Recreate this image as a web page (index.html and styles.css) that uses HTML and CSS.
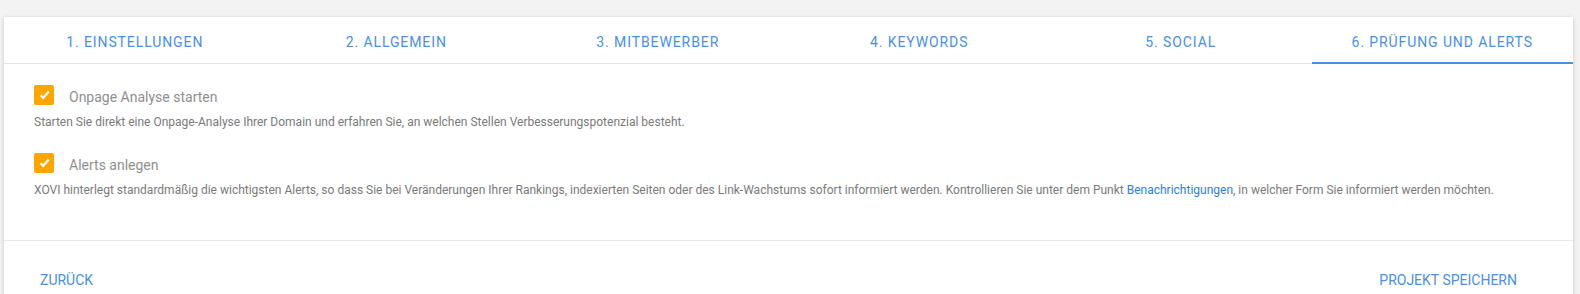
FILE: index.html
```html
<!DOCTYPE html>
<html lang="de">
<head>
    <meta charset="UTF-8">
    <meta name="viewport" content="width=device-width, initial-scale=1.0">
    <title>Projekt anlegen</title>
    <link rel="stylesheet" href="styles.css">
</head>
<body>
    <div class="wizard">
        <div class="tabs">
            <div class="tab">1. Einstellungen</div>
            <div class="tab">2. Allgemein</div>
            <div class="tab">3. Mitbewerber</div>
            <div class="tab">4. Keywords</div>
            <div class="tab">5. Social</div>
            <div class="tab active">6. Prüfung und Alerts</div>
        </div>

        <div class="content">
            <div class="option">
                <div class="option-row">
                    <span class="checkbox">
                        <svg width="20" height="20" viewBox="0 0 20 20"><path d="M6.6 10.2 L9.2 12.8 L14.8 6.6" fill="none" stroke="#fff" stroke-width="2.2"/></svg>
                    </span>
                    <label>Onpage Analyse starten</label>
                </div>
                <p class="hint">Starten Sie direkt eine Onpage-Analyse Ihrer Domain und erfahren Sie, an welchen Stellen Verbesserungspotenzial besteht.</p>
            </div>
            <div class="option">
                <div class="option-row">
                    <span class="checkbox">
                        <svg width="20" height="20" viewBox="0 0 20 20"><path d="M6.6 10.2 L9.2 12.8 L14.8 6.6" fill="none" stroke="#fff" stroke-width="2.2"/></svg>
                    </span>
                    <label>Alerts anlegen</label>
                </div>
                <p class="hint">XOVI hinterlegt standardmäßig die wichtigsten Alerts, so dass Sie bei Veränderungen Ihrer Rankings, indexierten Seiten oder des Link-Wachstums sofort informiert werden. Kontrollieren Sie unter dem Punkt <a href="#">Benachrichtigungen</a>, in welcher Form Sie informiert werden möchten.</p>
            </div>
        </div>

        <div class="footer">
            <button class="link-btn">Zurück</button>
            <button class="link-btn">Projekt speichern</button>
        </div>
    </div>
</body>
</html>
```

FILE: styles.css
```css
body {
    margin: 0;
    background-color: #f3f3f3;
    font-family: Roboto, Arial, sans-serif;
    padding: 17px 7px 0 4px;
    overflow: hidden;
}
.wizard {
    background-color: #fff;
    box-shadow: 0 1px 4px rgba(0, 0, 0, 0.2);
    height: 300px;
}
.tabs {
    display: grid;
    grid-template-columns: repeat(6, 1fr);
    border-bottom: 1px solid #e6e6e6;
}
.tab {
    height: 47px;
    padding-top: 15px;
    box-sizing: border-box;
    text-align: center;
    font-size: 14px;
    line-height: 20px;
    letter-spacing: 0.9px;
    text-transform: uppercase;
    color: #4a90e2;
    border-bottom: 2px solid transparent;
    margin-bottom: -1px;
}
.tab.active {
    border-bottom-color: #4a90e2;
}
.content {
    padding: 21px 30px 42px 30px;
    border-bottom: 1px solid #e8e8e8;
}
.option + .option {
    margin-top: 23px;
}
.option-row {
    display: flex;
    align-items: flex-start;
}
.checkbox {
    width: 20px;
    height: 20px;
    border-radius: 2px;
    background-color: #ffa500;
    display: flex;
}
.option-row label {
    margin-left: 15px;
    padding-top: 2px;
    font-size: 14px;
    line-height: 20px;
    color: #8f8f8f;
}
.hint {
    margin: 7px 0 0 0;
    font-size: 12px;
    line-height: 16px;
    color: #7a7a7a;
}
.hint a {
    color: #2f7ed8;
    text-decoration: none;
}
.footer {
    display: flex;
    justify-content: space-between;
    padding: 29px 56px 0 36px;
}
.link-btn {
    background: none;
    border: none;
    padding: 0;
    font-family: inherit;
    font-size: 14px;
    line-height: 20px;
    text-transform: uppercase;
    color: #4a90e2;
    cursor: pointer;
}
```
